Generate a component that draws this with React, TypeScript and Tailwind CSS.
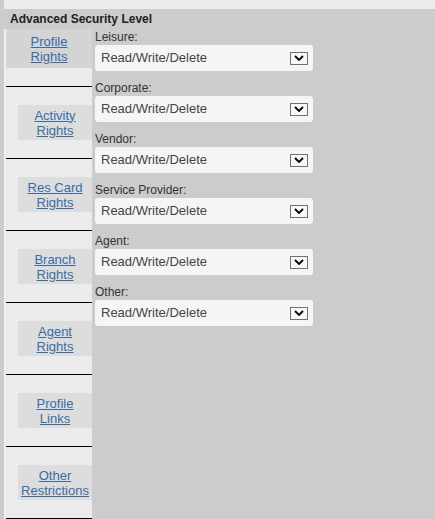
import React from 'react';

const font = { fontFamily: '"Liberation Sans", Arial, sans-serif' };

const navItems = [
    ['Activity', 'Rights'],
    ['Res Card', 'Rights'],
    ['Branch', 'Rights'],
    ['Agent', 'Rights'],
    ['Profile', 'Links'],
    ['Other', 'Restrictions'],
];

const fields = ['Leisure:', 'Corporate:', 'Vendor:', 'Service Provider:', 'Agent:', 'Other:'];

const NavLink = ({ lines }: { lines: string[] }) => (
    <a href="#" className="text-[13px] leading-[15px] text-[#3a6ca3] underline text-center block">
        {lines[0]}
        <br />
        {lines[1]}
    </a>
);

const FakeSelect = () => (
    <div className="w-[218px] h-[26px] bg-[#f5f5f5] rounded-[3px] flex items-center justify-between pl-[6px] pr-[5px]">
        <span className="text-[13px] text-[#444]">Read/Write/Delete</span>
        <div className="w-[18px] h-[13px] border border-[#707070] bg-[#f7f7f7] flex items-center justify-center">
            <svg width="10" height="6" viewBox="0 0 10 6">
                <path d="M1 1 L5 5 L9 1" fill="none" stroke="#000" strokeWidth="1.8" />
            </svg>
        </div>
    </div>
);

export default function App() {
    return (
        <div className="w-[435px] h-[519px] bg-[#cccccc] flex overflow-hidden" style={font}>
            <div className="w-[4px] shrink-0 bg-[#cccccc]" />
            <div className="flex-1 flex flex-col pt-[9px] bg-[#ececec]">
                <div className="flex-1 flex flex-col bg-[#cccccc]">
                    <div className="h-[20px] pl-[6px] flex items-center text-[12px] font-bold text-[#222]">
                        Advanced Security Level
                    </div>
                    <div className="flex flex-1">
                        {/* left nav */}
                        <div className="w-[88px] bg-[#ebebeb] border-l border-[#f2f2f2] pl-[1px] flex flex-col">
                            <div className="h-[58px] border-b border-black">
                                <div className="h-[39px] bg-[#d4d4d4] flex items-center justify-center">
                                    <NavLink lines={['Profile', 'Rights']} />
                                </div>
                            </div>
                            {navItems.map((lines, i) => (
                                <div key={i} className="h-[72px] border-b border-black flex items-center justify-end shrink-0">
                                    <div className="w-[74px] h-[35px] bg-[#dddddd] flex items-center justify-center">
                                        <NavLink lines={lines} />
                                    </div>
                                </div>
                            ))}
                        </div>
                        {/* fields */}
                        <div className="flex-1 pl-[3px] pt-[1px]">
                            {fields.map((f) => (
                                <div key={f} className="mb-[10px]">
                                    <div className="text-[12px] leading-[15px] text-[#333]">{f}</div>
                                    <FakeSelect />
                                </div>
                            ))}
                        </div>
                    </div>
                </div>
            </div>
        </div>
    );
}
